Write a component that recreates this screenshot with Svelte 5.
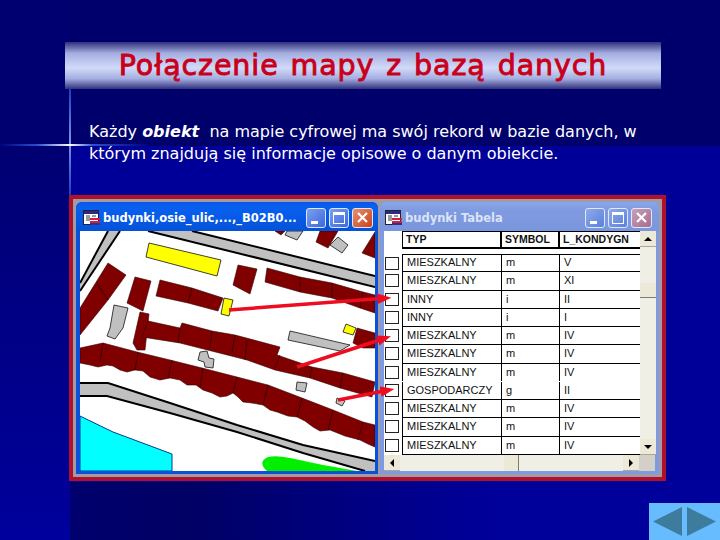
<script>
  const rows = [
    ["MIESZKALNY", "m", "V"],
    ["MIESZKALNY", "m", "XI"],
    ["INNY", "i", "II"],
    ["INNY", "i", "I"],
    ["MIESZKALNY", "m", "IV"],
    ["MIESZKALNY", "m", "IV"],
    ["MIESZKALNY", "m", "IV"],
    ["GOSPODARCZY", "g", "II"],
    ["MIESZKALNY", "m", "IV"],
    ["MIESZKALNY", "m", "IV"],
    ["MIESZKALNY", "m", "IV"],
  ]

  const maroon = [
    "108,263 126,275 108,300 80,335 80,308",
    "135,277 151,281 143,311 127,303",
    "160,280 192,288 223,298 218,311 188,303 156,296",
    "140,312 149,314 145,350 137,350 133,343",
    "148,321 180,328 182,323 212,331 235,335 280,347 277,355 312,367 343,373 375,382 372,397 340,388 310,378 275,370 247,360 180,343 142,337",
    "238,265 257,269 250,294 233,285",
    "267,268 300,277 332,283 363,292 375,295 375,313 360,308 332,298 300,292 265,282",
    "275,231 285,231 281,235",
    "320,231 338,231 328,248 316,242",
    "375,232 375,258 362,253",
    "357,328 375,333 375,348 363,348 353,343",
    "80,348 103,343 137,352 170,360 202,368 237,377 268,385 302,398 333,410 363,422 375,425 375,447 368,444 360,440 345,436 330,430 320,431 313,427 305,421 297,417 288,416 277,412 270,410 263,405 252,403 243,402 238,397 233,393 227,396 220,397 212,393 203,390 196,385 187,385 180,380 170,378 160,380 150,377 143,371 135,370 127,372 120,370 113,366 107,365 98,367 90,365 80,363",
  ]

  const seams = [
    "103,343 100,362", "138,352 135,370", "172,360 168,378", "203,368 200,387",
    "237,377 233,393", "268,385 263,405", "302,398 297,417", "333,410 328,430", "363,422 358,440",
    "192,288 188,303", "300,277 300,292", "332,283 332,298", "363,292 360,308", "180,328 178,343",
    "212,331 210,348", "280,355 275,368", "312,367 310,378", "343,373 340,388", "97,283 108,300",
    "235,335 232,352", "247,340 245,360",
  ]

  const gray = [
    "114,305 128,308 123,328 115,339 107,336 110,328",
    "287,231 303,231 297,240 285,235",
    "338,237 348,245 342,253 330,245",
    "290,331 350,345 340,351 288,340",
    "200,352 207,351 209,358 214,359 213,368 205,367 204,362 198,360",
    "297,382 307,383 305,392 296,390",
    "337,398 345,401 342,406 336,403",
  ]

  const yellow = [
    "149,243 221,260 217,276 146,257",
    "224,298 233,300 229,316 221,314",
    "346,324 356,328 353,335 343,332",
  ]

  const roads = [
    { fill: "80,283 108,231 120,231 80,291", lines: ["80,283 108,231", "80,291 120,231"] },
    { fill: "192,231 375,276 375,287 148,231", lines: ["192,231 375,276", "148,231 375,287"] },
    {
      fill: "80,383 108,383 170,403 237,425 303,445 375,461 375,471 365,471 303,453 237,432 170,413 107,396 80,396",
      lines: ["80,383 108,383 170,403 237,425 303,445 375,461", "80,396 107,396 170,413 237,432 303,453 365,471"],
    },
  ]

  // arrows run over both windows, so they use slide coordinates
  const arrows = [
    { x1: 229, y1: 310, x2: 381, y2: 298.5 },
    { x1: 297, y1: 367, x2: 381, y2: 339.5 },
    { x1: 338, y1: 400, x2: 384, y2: 391 },
  ]
</script>

{#snippet winIcon()}
  <svg class="winicon" width="17" height="16" viewBox="0 0 17 16">
    <rect x="0.5" y="0.5" width="15" height="14" fill="#fff" stroke="#223" />
    <rect x="1" y="1" width="14" height="3" fill="#2a2a80" />
    <path d="M3 6h4M3 8h4M3 10h4M9 6h4" stroke="#334" fill="none" />
    <rect x="7" y="8" width="10" height="2" fill="#d02040" />
    <rect x="7" y="11" width="10" height="2" fill="#d02040" />
    <rect x="7" y="13" width="10" height="2" fill="#303090" />
  </svg>
{/snippet}

{#snippet controls()}
  <div class="controls">
    <span class="ctl"><i class="min"></i></span>
    <span class="ctl"><i class="max"></i></span>
    <span class="ctl close">
      <svg width="13" height="13" viewBox="0 0 13 13">
        <path d="M2 2l9 9M11 2l-9 9" stroke="#fff" stroke-width="2.2" fill="none" />
      </svg>
    </span>
  </div>
{/snippet}

<div class="slide">
  <i class="glow-v"></i>
  <i class="glow-h"></i>

  <h1>Połączenie mapy z bazą danych</h1>

  <p class="lead">
    Każdy <em>obiekt</em>&nbsp; na mapie cyfrowej ma swój rekord w bazie danych, w<br />
    którym znajdują się informacje opisowe o danym obiekcie.
  </p>

  <div class="frame">
    <section class="window active">
      <header>
        {@render winIcon()}
        <span class="title">budynki,osie_ulic,...,_B02B0...</span>
        {@render controls()}
      </header>
      <div class="client">
        <svg class="map" width="295" height="240" viewBox="80 231 295 240">
          <polygon class="water" points="80,416 113,432 172,454 172,471 80,471" />
          <path class="grass" d="M267,471Q257,462 268,457Q276,455 290,458L323,465L357,471z" />
          {#each roads as road}
            <polygon class="road" points={road.fill} />
            {#each road.lines as line}
              <polyline class="kerb" points={line} />
            {/each}
          {/each}
          {#each maroon as points}
            <polygon class="house" {points} />
          {/each}
          {#each seams as points}
            <polyline class="seam" {points} />
          {/each}
          {#each gray as points}
            <polygon class="shed" {points} />
          {/each}
          {#each yellow as points}
            <polygon class="pick" {points} />
          {/each}
        </svg>
      </div>
    </section>

    <section class="window">
      <header>
        {@render winIcon()}
        <span class="title">budynki Tabela</span>
        {@render controls()}
      </header>
      <div class="client table-client">
        <div class="table-area">
          <div class="grid">
            <div class="head">
              <span>TYP</span>
              <span>SYMBOL</span>
              <span>L_KONDYGN</span>
            </div>
            {#each rows as row, i}
              <div class="row" class:noline={i === 6}>
                <b class="sel"></b>
                {#each row as cell}
                  <span>{cell}</span>
                {/each}
              </div>
            {/each}
          </div>
          <div class="vscroll">
            <span class="btn"><i class="tri up"></i></span>
            <span class="thumb-v"></span>
            <span class="btn end"><i class="tri down"></i></span>
          </div>
        </div>
        <div class="hscroll">
          <span class="btn"><i class="tri left"></i></span>
          <span class="thumb-h"></span>
          <span class="btn"><i class="tri right"></i></span>
          <span class="corner"></span>
        </div>
      </div>
    </section>
  </div>

  <svg class="arrows" width="720" height="540" viewBox="0 0 720 540">
    <defs>
      <marker id="head" markerWidth="4" markerHeight="3" refX="1" refY="1.5" orient="auto">
        <path d="M0 0L4 1.5L0 3z" fill="#ee0c20" />
      </marker>
    </defs>
    {#each arrows as a}
      <line {...a} stroke="#ee0c20" stroke-width="3.5" marker-end="url(#head)" />
    {/each}
  </svg>

  <div class="nav">
    <svg width="71" height="37" viewBox="0 0 71 37">
      <path d="M4 18.5L33 4V33z M38 4L67 18.5L38 33z" fill="#3e7c9e" />
    </svg>
  </div>
</div>

<style>
  :global(body) {
    margin: 0;
  }
  .slide {
    position: relative;
    width: 720px;
    height: 540px;
    overflow: hidden;
    display: flex;
    flex-direction: column;
    font-family: "DejaVu Sans", sans-serif;
    background:
      linear-gradient(90deg, #000070 0 70px, transparent 70px) 0 0 / 100% 146px no-repeat,
      linear-gradient(#000072, #00009c) 0 146px / 70px 394px no-repeat,
      linear-gradient(90deg, #00006e, #000064 18%, #00009a 65%) 70px 482px / 650px 58px no-repeat,
      #000098;
  }
  .slide::before {
    content: "";
    position: absolute;
    left: 70px;
    top: 0;
    width: 650px;
    height: 146px;
    background: #00006c;
  }
  .glow-v {
    position: absolute;
    left: 69px;
    top: 88px;
    width: 2px;
    height: 108px;
    background: linear-gradient(#1a3cc0, #7d94ea 50%, #1a3cc0);
  }
  .glow-h {
    position: absolute;
    left: 0;
    top: 144px;
    width: 150px;
    height: 2px;
    background: linear-gradient(90deg, #00007a, #2a50d0 25%, #fff 47%, #2a50d0 62%, #00007a);
  }
  h1 {
    position: relative;
    flex: none;
    margin: 42px 59px 0 65px;
    height: 47px;
    line-height: 48px;
    font-size: 28.5px;
    font-weight: 400;
    letter-spacing: 0.9px;
    word-spacing: 2px;
    text-align: center;
    color: #c8001a;
    -webkit-text-stroke: 0.9px #c8001a;
    background: linear-gradient(#30307c, #a4aee0 24%, #d2daf8 55%, #a4aee0 78%, #30307c);
  }
  .lead {
    position: relative;
    flex: none;
    margin: 32px 0 0 89px;
    height: 74px;
    font-size: 16px;
    line-height: 22px;
    color: #fff;
  }
  .lead em {
    font-weight: 700;
    font-style: italic;
  }
  .frame {
    position: relative;
    flex: none;
    display: flex;
    gap: 2px;
    box-sizing: border-box;
    width: 597px;
    height: 286px;
    margin-left: 69px;
    padding: 3px;
    border: 4px solid #b20f2a;
    background: #a09ca4;
  }
  .window {
    display: flex;
    flex-direction: column;
    width: 279px;
    border-radius: 6px 6px 0 0;
    background: #7f9ae0;
  }
  .window.active {
    width: 302px;
    background: #0b50d8;
  }
  header {
    flex: none;
    display: flex;
    align-items: center;
    box-sizing: border-box;
    height: 29px;
    padding: 2px 7px 0 5px;
    border-radius: 6px 6px 0 0;
    background: linear-gradient(#8aa6ea, #7f9ae0 30%, #7a96dc);
  }
  .active header {
    padding: 2px 5px 0 7px;
    background: linear-gradient(#0a58e4, #0860f0 20%, #0552d8);
  }
  .title {
    flex: 1;
    margin-left: 3px;
    font: 700 11.5px "DejaVu Sans", sans-serif;
    white-space: nowrap;
    color: #dbe4f6;
  }
  .active .title {
    color: #fff;
  }
  .controls {
    display: flex;
    gap: 3px;
  }
  .ctl {
    position: relative;
    display: flex;
    align-items: center;
    justify-content: center;
    box-sizing: border-box;
    width: 20px;
    height: 20px;
    border: 1px solid #dfe8fa;
    border-radius: 3px;
    background: linear-gradient(135deg, #7d9ff0, #3a68e0);
  }
  .window:not(.active) .ctl {
    background: linear-gradient(135deg, #8eaaec, #5a80dc);
  }
  .ctl.close {
    width: 21px;
    background: linear-gradient(135deg, #e89070, #c8401c);
  }
  .window:not(.active) .ctl.close {
    background: linear-gradient(135deg, #c8a0b8, #a86c90);
  }
  .min {
    position: absolute;
    left: 4px;
    bottom: 3px;
    width: 7px;
    height: 3px;
    background: #fff;
  }
  .max {
    box-sizing: border-box;
    width: 12px;
    height: 12px;
    border: 1px solid #fff;
    border-top-width: 3px;
  }
  .client {
    flex: 1;
    min-height: 0;
    margin: 0 3px 3px 4px;
    background: #fff;
  }
  .map {
    display: block;
  }
  .water {
    fill: #00ffff;
    stroke: #003a90;
    stroke-width: 1;
  }
  .grass {
    fill: #00f000;
  }
  .road {
    fill: #c0c0c0;
  }
  .kerb {
    fill: none;
    stroke: #000;
    stroke-width: 2;
  }
  .house {
    fill: #800000;
    stroke: #300;
    stroke-width: 0.6;
  }
  .seam {
    fill: none;
    stroke: #200;
    stroke-width: 0.7;
  }
  .shed {
    fill: #c0c0c0;
    stroke: #111;
    stroke-width: 0.8;
  }
  .pick {
    fill: #ffff00;
    stroke: #111;
    stroke-width: 0.8;
  }
  .table-client {
    display: flex;
    flex-direction: column;
    margin-right: 4px;
    font: 11px "Liberation Sans", Arial, sans-serif;
    color: #111;
  }
  .table-area {
    flex: none;
    display: flex;
    height: 224px;
  }
  .grid {
    flex: 1;
    padding-left: 18px;
  }
  .head,
  .row {
    display: grid;
    grid-template-columns: 99px 58px 80px;
    align-items: stretch;
  }
  .head {
    box-sizing: border-box;
    height: 18px;
    margin-bottom: 5px;
    border: 1px solid #000;
    border-width: 1px 0 2px 1px;
    font-size: 10.5px;
    font-weight: 700;
    line-height: 15px;
  }
  .head span {
    padding-left: 3px;
    border-right: 2px solid #000;
  }
  .head span:last-child {
    border-right: 0;
  }
  .row {
    position: relative;
    box-sizing: border-box;
    height: 18.25px;
    border-bottom: 1px solid #000;
    line-height: 17px;
  }
  .row:nth-child(2) {
    border-top: 1px solid #000;
    line-height: 14px;
  }
  .row.noline {
    border-bottom-color: transparent;
  }
  .row span {
    padding-left: 4px;
    border-left: 1px solid #000;
  }
  .sel {
    position: absolute;
    left: -17px;
    top: 2px;
    box-sizing: border-box;
    width: 14px;
    height: 13px;
    border: 1px solid #222;
    background: #fff;
  }
  .vscroll {
    flex: none;
    display: flex;
    flex-direction: column;
    width: 16px;
    background: #f0efe6;
  }
  .btn {
    flex: none;
    display: flex;
    align-items: center;
    justify-content: center;
    width: 16px;
    height: 16px;
    background: #ece9d8;
    border-bottom: 1px solid #aca899;
    box-sizing: border-box;
  }
  .btn.end {
    margin-top: auto;
  }
  .thumb-v {
    box-sizing: border-box;
    height: 15px;
    margin-top: 36px;
    background: #ece9d8;
    border-bottom: 1px solid #807c70;
  }
  .tri {
    width: 0;
    height: 0;
    border: 4px solid transparent;
  }
  .tri.up {
    border-top-width: 0;
    border-bottom-color: #000;
  }
  .tri.down {
    border-bottom-width: 0;
    border-top-color: #000;
  }
  .tri.left {
    border-left-width: 0;
    border-right-color: #000;
  }
  .tri.right {
    border-right-width: 0;
    border-left-color: #000;
  }
  .hscroll {
    flex: none;
    display: flex;
    height: 16px;
    background: #f0efe6;
  }
  .thumb-h {
    box-sizing: border-box;
    width: 15px;
    margin-left: 104px;
    margin-right: auto;
    background: #ece9d8;
    border-right: 1px solid #807c70;
  }
  .corner {
    width: 16px;
    background: #d4d0c8;
  }
  .arrows {
    position: absolute;
    left: 0;
    top: 0;
    pointer-events: none;
  }
  .nav {
    flex: none;
    display: flex;
    align-self: flex-end;
    margin-top: 22px;
    background: #66bcff;
  }
</style>
